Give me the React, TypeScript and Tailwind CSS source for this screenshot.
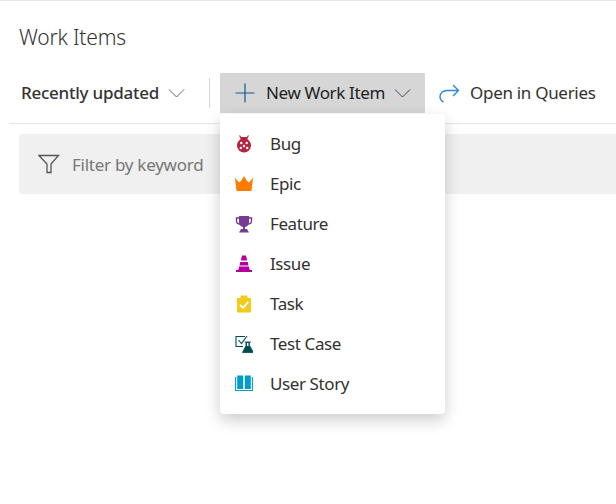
const font = { fontFamily: '"Noto Sans", "Open Sans", sans-serif' };

function Chevron({ className }: { className?: string }) {
  return (
    <svg width="17" height="16" viewBox="0 0 17 16" fill="none" stroke="currentColor" strokeWidth="1" className={className}>
      <path d="M1 4.500 8.500 12 16 4.500" />
    </svg>
  );
}

function BugIcon() {
  return (
    <svg width="18" height="18" viewBox="0 0 18 18">
      <path d="M4.500 .5 6.500 3.500M13.500 .5 11.500 3.500" stroke="#b4233f" strokeWidth="1.200" fill="none" />
      <rect x="5.500" y="2" width="7" height="4" fill="#b4233f" />
      <circle cx="9" cy="10.500" r="7" fill="#b4233f" />
      <circle cx="6.300" cy="8" r="1.200" fill="#fff" />
      <circle cx="11.700" cy="8" r="1.200" fill="#fff" />
      <circle cx="9" cy="11" r="1.200" fill="#fff" />
      <circle cx="5.800" cy="13" r="1.200" fill="#fff" />
      <circle cx="12.200" cy="13" r="1.200" fill="#fff" />
    </svg>
  );
}

function EpicIcon() {
  return (
    <svg width="18" height="18" viewBox="0 0 18 18">
      <path d="M0 2.500 4 7.500 6 6 9 1 12 6 14 7.500 18 2.500 16.500 16H1.500Z" fill="#ff7b00" />
    </svg>
  );
}

function FeatureIcon() {
  return (
    <svg width="18" height="18" viewBox="0 0 18 18">
      <path d="M4.500 3H1.500v3c0 2 1.500 3 4 3.200M13.500 3h3v3c0 2-1.500 3-4 3.200" fill="none" stroke="#773b93" strokeWidth="1.400" />
      <path d="M4 1h10v6c0 3-2.200 5-5 5S4 10 4 7Z" fill="#773b93" />
      <rect x="8" y="11.500" width="2" height="2.500" fill="#773b93" />
      <path d="M4 17.500 6 14h6l2 3.500Z" fill="#773b93" />
    </svg>
  );
}

function IssueIcon() {
  return (
    <svg width="18" height="18" viewBox="0 0 18 18">
      <path d="M7 .5h4l1.200 5H5.800Z" fill="#b4009e" />
      <path d="M5.200 7h7.600l.7 3.500H4.500Z" fill="#b4009e" />
      <path d="M4.200 11.500h9.600l.9 3.500H3.300Z" fill="#b4009e" />
      <rect x="1" y="15" width="16" height="2" fill="#b4009e" />
    </svg>
  );
}

function TaskIcon() {
  return (
    <svg width="18" height="18" viewBox="0 0 18 18">
      <path d="M2 3h3.500V1.500C5.500 1 6 .5 6.500 .5h5c.5 0 1 .5 1 1V3H16v14.500H2Z" fill="#f2cb1d" />
      <path d="M5 9.800 8 12.800 13.300 6.800" fill="none" stroke="#fff" strokeWidth="1.800" />
    </svg>
  );
}

function TestCaseIcon() {
  return (
    <svg width="18" height="18" viewBox="0 0 18 18">
      <path d="M8 11.500H1V1.500h9" fill="none" stroke="#004b50" strokeWidth="1.100" />
      <path d="M3.500 5 6.500 8.500 12 1" fill="none" stroke="#004b50" strokeWidth="1.100" />
      <path d="M9.500 7h6.500M11 7v3.500L7.500 17.500h11L14.500 10.500V7" fill="#004b50" stroke="#004b50" strokeWidth="0.800" />
      <path d="M12 8h1.500v3h-1.500Z" fill="#fff" />
    </svg>
  );
}

function StoryIcon() {
  return (
    <svg width="18" height="18" viewBox="0 0 18 18">
      <path d="M.6 2v13.500h16.800V2" fill="none" stroke="#009ccc" strokeWidth="1.100" />
      <path d="M2.200 .5h6v13.500h-6ZM9.800 .5h6v13.500h-6Z" fill="#009ccc" />
    </svg>
  );
}

const menuItems = [
  { label: "Bug", icon: <BugIcon /> },
  { label: "Epic", icon: <EpicIcon /> },
  { label: "Feature", icon: <FeatureIcon /> },
  { label: "Issue", icon: <IssueIcon /> },
  { label: "Task", icon: <TaskIcon /> },
  { label: "Test Case", icon: <TestCaseIcon /> },
  { label: "User Story", icon: <StoryIcon /> },
];

export default function App() {
  return (
    <div style={font} className="relative h-[504px] w-[616px] overflow-hidden border-t border-[#e8e8e8] bg-white text-[#201f1e]">
      <h1 className="pl-[19px] pt-[21px] text-[21px] leading-[30px] font-light tracking-[-0.2px] text-[#323130]">Work Items</h1>

      <div className="ml-[9px] mt-[21px] flex h-[51px] items-start whitespace-nowrap border-b border-[#e6e6e6]">
        <div className="flex h-10 w-[200px] items-center pl-3">
          <span className="text-[17px] font-medium tracking-[-0.25px] text-[#333]">Recently updated</span>
          <Chevron className="ml-[9px] text-[#666]" />
        </div>
        <div className="mt-[5px] h-[30px] w-px bg-[#d8d8d8]" />
        <div className="ml-[10px] flex h-10 w-[205px] items-center bg-[#d6d6d6] pl-[15px]">
          <svg width="20" height="20" viewBox="0 0 20 20" fill="none" stroke="#0f5a8f" strokeWidth="1.200">
            <path d="M10 .5v19M.5 10h19" />
          </svg>
          <span className="ml-[11px] text-[17px] tracking-[-0.35px]">New Work Item</span>
          <Chevron className="ml-[9px] text-[#444]" />
        </div>
        <div className="ml-[14px] flex h-10 items-center">
          <svg width="21" height="20" viewBox="0 0 21 20" fill="none" stroke="#2b88d8" strokeWidth="1.400">
            <path d="M14 2 19.500 7.500 14 13M19.500 7.500H8C4 7.500 1 10 1 13.500 1 16 2.500 18 4.500 19" />
          </svg>
          <span className="ml-[10px] text-[17px] tracking-[-0.3px] text-[#323130]">Open in Queries</span>
        </div>
      </div>

      <div className="ml-[19px] mt-[10px] flex h-[60px] items-center rounded-l bg-[#f0f0f0] pl-[19px]">
        <svg width="22" height="20" viewBox="0 0 22 20" fill="none" stroke="#555" strokeWidth="1.300">
          <path d="M1 1.500h19.500L13 10v8.500H9V10Z" />
        </svg>
        <span className="ml-[12px] pt-[2px] text-[17px] tracking-[-0.26px] text-[#777]">Filter by keyword</span>
      </div>

      <div className="absolute left-[220px] top-[113px] w-[225px] rounded bg-white py-[10px] shadow-[0_6px_16px_rgba(0,0,0,0.2)]">
        {menuItems.map((item) => (
          <div key={item.label} className="flex h-10 items-center pl-[15px]">
            <span className="flex w-[18px] justify-center">{item.icon}</span>
            <span className="ml-[17px] text-[17px] tracking-[-0.4px] text-[#323130]">{item.label}</span>
          </div>
        ))}
      </div>
    </div>
  );
}
